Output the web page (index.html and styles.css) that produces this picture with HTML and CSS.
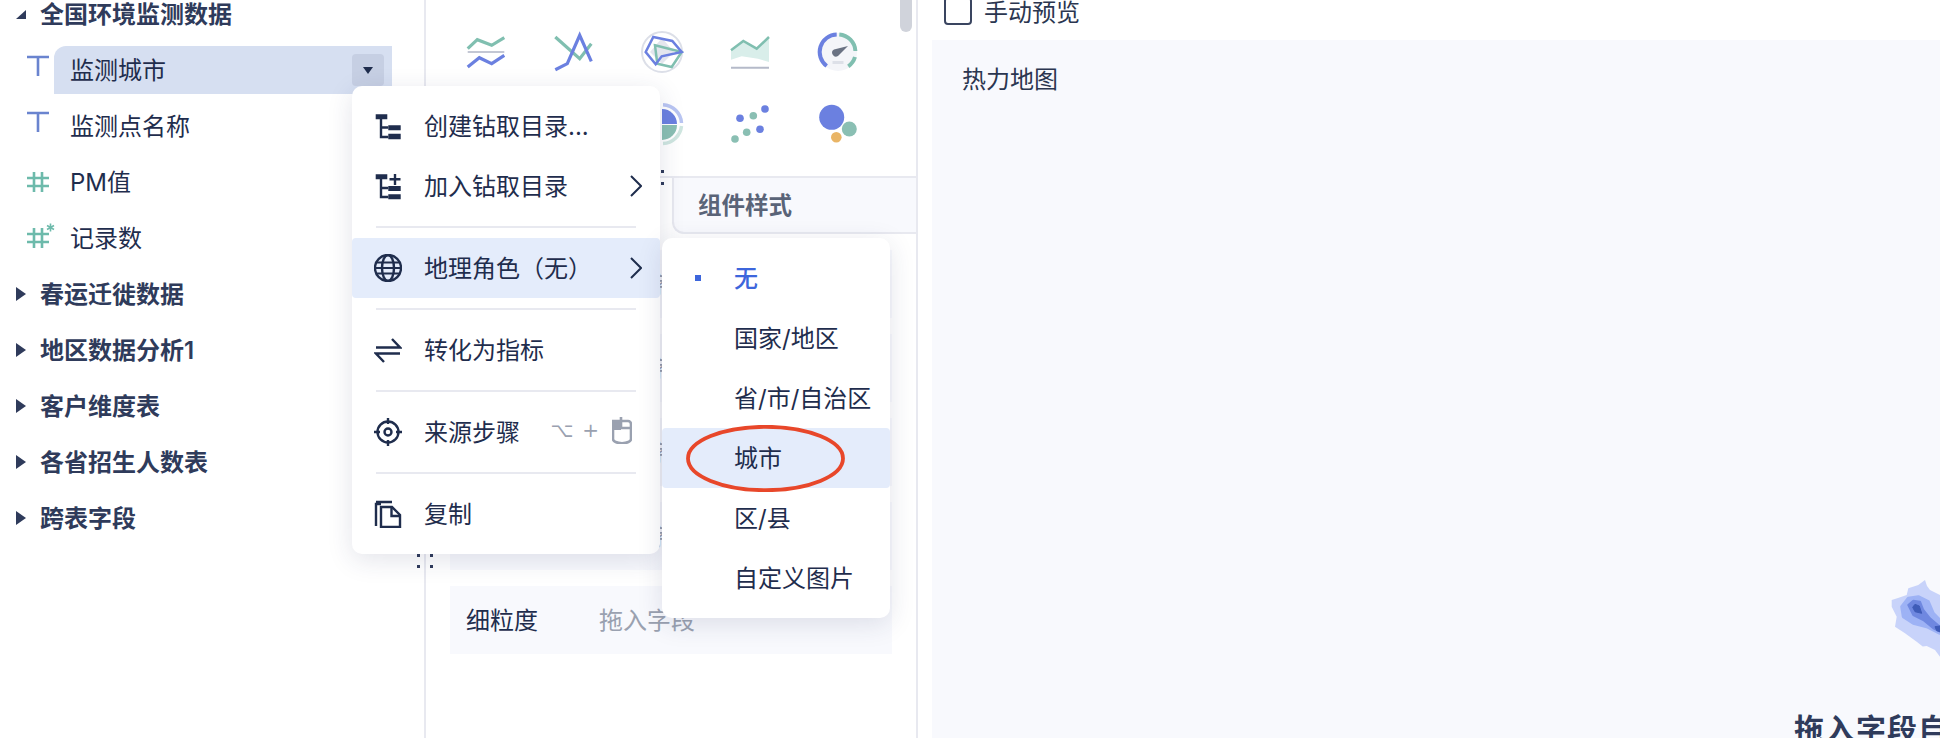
FILE: index.html
```html
<!DOCTYPE html>
<html lang="zh-CN">
<head>
  <meta charset="UTF-8">
  <title>热力地图</title>
  <link rel="stylesheet" href="styles.css">
</head>
<body>

<div class="app">

  <!-- data tree -->
  <aside class="tree-panel">
    <div class="tree-row head">
      <svg class="caret" viewBox="0 0 10 14"><path d="M0 12 10 3v9z"/></svg>
      <span>全国环境监测数据</span>
    </div>
    <div class="tree-row field">
      <svg class="type-icon text-type" viewBox="0 0 27 28"><path d="M0 1h22M11 1v19"/></svg>
      <div class="field-name selected">
        <span>监测城市</span>
        <span class="field-btn"><svg viewBox="0 0 10 7"><path d="M0 0h10L5 7z"/></svg></span>
      </div>
    </div>
    <div class="tree-row field">
      <svg class="type-icon text-type" viewBox="0 0 27 28"><path d="M0 1h22M11 1v19"/></svg>
      <div class="field-name"><span>监测点名称</span></div>
    </div>
    <div class="tree-row field">
      <svg class="type-icon num-type" viewBox="0 0 27 28"><path d="M0 10h22M0 18h22M7 4v20M15 4v20"/></svg>
      <div class="field-name"><span>PM值</span></div>
    </div>
    <div class="tree-row field">
      <svg class="type-icon num-type" viewBox="0 0 27 28"><path d="M0 10h22M0 18h22M7 4v20M15 4v20"/><path class="star" d="M23.5-.5v8M20 1.5l7 4M27 1.5l-7 4"/></svg>
      <div class="field-name"><span>记录数</span></div>
    </div>
    <div class="tree-row head">
      <svg class="caret" viewBox="0 0 10 14"><path d="M0 0l10 7-10 7z"/></svg>
      <span>春运迁徙数据</span>
    </div>
    <div class="tree-row head">
      <svg class="caret" viewBox="0 0 10 14"><path d="M0 0l10 7-10 7z"/></svg>
      <span>地区数据分析1</span>
    </div>
    <div class="tree-row head">
      <svg class="caret" viewBox="0 0 10 14"><path d="M0 0l10 7-10 7z"/></svg>
      <span>客户维度表</span>
    </div>
    <div class="tree-row head">
      <svg class="caret" viewBox="0 0 10 14"><path d="M0 0l10 7-10 7z"/></svg>
      <span>各省招生人数表</span>
    </div>
    <div class="tree-row head">
      <svg class="caret" viewBox="0 0 10 14"><path d="M0 0l10 7-10 7z"/></svg>
      <span>跨表字段</span>
    </div>
    <div class="drag-dots tree-dots"><i></i><i></i><i></i><i></i></div>
  </aside>

  <!-- chart types and settings -->
  <section class="config-panel">
    <div class="scroll-thumb"></div>
    <div class="chart-grid">
      <svg viewBox="0 0 44 44" fill="none" stroke-width="3.2">
        <path stroke="#80bfb0" d="M3.7 18.7 13.3 9.7l14.4 5.6 12.6-7.6"/>
        <path stroke="#c3c7d4" stroke-width="2" d="M3.7 22h36.6"/>
        <path stroke="#6b80e0" d="M3.7 37l11.6-9.3 12.4 6 12.6-8.4"/>
      </svg>
      <svg viewBox="0 0 44 44" fill="none" stroke-width="3.2">
        <path stroke="#80bfb0" d="M3.3 7l24.4 21.7L39.3 13.700"/>
        <path stroke="#6b80e0" d="M3.300 39.700l12-6L27.700 5.300 39.300 31.300"/>
      </svg>
      <svg viewBox="0 0 44 44" fill="none">
        <circle cx="22" cy="22" r="20" stroke="#dcdfe8" stroke-width="2"/>
        <path fill="#e4e6ee" d="M22 8 34 22 22 34 10 22z"/>
        <path stroke="#80bfb0" stroke-width="2.500" d="M15 15.300 41.700 22 31.700 37l-14.400-3.300z"/>
        <path stroke="#6b80e0" stroke-width="2.500" d="M13.300 7l19 4 9.400 11-20 4.300-6 8-10-12.300z"/>
      </svg>
      <svg viewBox="0 0 44 44" fill="none">
        <path fill="#d9eeea" d="M3 20.300 15.300 11l13.400 7.700L41 7v25l-11-3.300-16.300-2.400L3 29.700z"/>
        <path stroke="#80bfb0" stroke-width="2.500" d="M3 20.300 15.300 11l13.400 7.700L41 7"/>
        <path stroke="#b5bac9" stroke-width="2" d="M3 37.700h38"/>
      </svg>
      <svg viewBox="0 0 44 44" fill="none">
        <circle cx="22" cy="22" r="19" fill="#f4f5f9"/>
        <path stroke="#6b80e0" stroke-width="4" d="M10.700 36A17.500 17.500 0 0 1 20.700 4.500"/>
        <path stroke="#80bfb0" stroke-width="4" d="M23.300 4.500A17.500 17.500 0 0 1 39.400 21"/>
        <path stroke="#80bfb0" stroke-width="4" d="M39 27A17.500 17.500 0 0 1 32.300 36.300"/>
        <path fill="#6a7283" d="M18 19.500 32 16 22 26a3.500 3.500 0 0 1-4-6.500z"/>
        <path stroke="#dde0e8" stroke-width="3" d="M16.500 32.500h11"/>
      </svg>
      <div class="chart-slot"></div>
      <div class="chart-slot"></div>
      <svg viewBox="0 0 44 44" fill="none">
        <path fill="#6b80e0" d="M22 22V7a15 15 0 0 1 15 15z"/>
        <path fill="#8abfb3" d="M22 23h15a15 15 0 0 1-15 15z"/>
        <path stroke="#b9c5f2" stroke-width="3.500" d="M23 2.700A19.500 19.500 0 0 1 41.500 21"/>
        <path stroke="#cfe6e0" stroke-width="3.500" d="M41.500 24A19.500 19.500 0 0 1 23 41.500"/>
      </svg>
      <svg viewBox="0 0 44 44">
        <g fill="#6b80e0"><circle cx="12" cy="16.300" r="3.800"/><circle cx="37" cy="7" r="3.800"/><circle cx="32" cy="27.300" r="3.800"/></g>
        <g fill="#8abfb3"><circle cx="25.300" cy="13.700" r="3.800"/><circle cx="18.700" cy="30.300" r="3.800"/><circle cx="7" cy="37" r="3.800"/></g>
      </svg>
      <svg viewBox="0 0 44 44">
        <circle cx="15.700" cy="15.300" r="12.500" fill="#6b80e0"/>
        <circle cx="33.300" cy="27" r="7.500" fill="#8abfb3"/>
        <circle cx="20.300" cy="35.300" r="5.300" fill="#e9b566"/>
      </svg>
    </div>

    <div class="tabs">
      <div class="drag-dots tab-dots"><i></i><i></i><i></i><i></i></div>
      <div class="tab">组件样式</div>
    </div>

    <div class="slots">
      <div class="slot"><span class="slot-label"></span><span class="slot-hint">拖入字段</span></div>
      <div class="slot"><span class="slot-label"></span><span class="slot-hint">拖入字段</span></div>
      <div class="slot"><span class="slot-label"></span><span class="slot-hint">拖入字段</span></div>
      <div class="slot"><span class="slot-label"></span><span class="slot-hint">拖入字段</span></div>
      <div class="slot"><span class="slot-label">细粒度</span><span class="slot-hint">拖入字段</span></div>
    </div>
  </section>

  <!-- preview -->
  <main class="preview">
    <div class="preview-bar">
      <span class="checkbox"></span>
      <span>手动预览</span>
    </div>
    <div class="canvas">
      <div class="canvas-title">热力地图</div>
      <div class="empty-state">
        <svg class="heat-blob" viewBox="0 0 60 90">
          <path fill="#c8d3fa" d="M11.700 30 18 28l8.700-3 1.600-6.700 10-3.300L45 10l2 6 3 4 10 5v61.700L55 80l-8.300-4-4 .5-6-4.800L25 63.300l-10-6.600 1.700-10-5-10z"/>
          <path fill="#9db2f5" d="M21.700 36.700 28.300 28.300 38.300 26.700 48.300 31.700 53.300 43.300 60 50V63.300L46.700 56.700 33.300 53.300 23.300 46.700z" stroke="#9db2f5" stroke-width="3" stroke-linejoin="round"/>
          <path fill="#6f88e0" d="M28.300 35 33.300 30.700 40 31.700 43.300 40 50 48.300 60 56.700V61.700L53.300 58.300 43.300 50 33.300 45z" stroke="#6f88e0" stroke-width="2" stroke-linejoin="round"/>
          <path fill="#3f5cb8" d="M32.700 37.300 35 34.300 39.300 36 41.700 43.300 35 41.700zM55 56.700 60 56V61.700L56.700 60.700z" stroke="#3f5cb8" stroke-linejoin="round"/>
        </svg>
        <div class="empty-text">拖入字段自动生成图表</div>
      </div>
    </div>
  </main>

  <!-- field context menu -->
  <div class="menu field-menu">
    <div class="menu-item">
      <svg class="menu-icon" viewBox="0 0 28 28"><path class="solid" d="M1.700 2.300h11.600v5H1.700zM14.300 13.300h12.400v5H14.300zM14.300 21.700h12.400v5.600H14.300z"/><path d="M7 7v18h7.300M7 15.500h7.300"/></svg>
      <span>创建钻取目录...</span>
    </div>
    <div class="menu-item">
      <svg class="menu-icon" viewBox="0 0 28 28"><path class="solid" d="M1.700 2.300h11.600v5H1.700zM14.300 14h12.400v5H14.300zM14.300 22.300h12.400v5H14.300z"/><path d="M7 7v18h7.300M7 16h7.300M21 2v11M15.500 7.300h11"/></svg>
      <span>加入钻取目录</span>
      <svg class="chevron" viewBox="0 0 12 22"><path d="M1 1l10 10-10 10"/></svg>
    </div>
    <div class="menu-line"></div>
    <div class="menu-item active">
      <svg class="menu-icon" viewBox="0 0 28 28"><circle cx="14" cy="14" r="13"/><ellipse cx="14" cy="14" rx="6" ry="13"/><path d="M1 14h26M3 8.500h22M3 19.500h22" stroke-width="1.800"/></svg>
      <span>地理角色（无）</span>
      <svg class="chevron" viewBox="0 0 12 22"><path d="M1 1l10 10-10 10"/></svg>
    </div>
    <div class="menu-line"></div>
    <div class="menu-item">
      <svg class="menu-icon" viewBox="0 0 28 28"><path d="M2 11.500h24L18 3M26 17.500H2l8 8.500"/></svg>
      <span>转化为指标</span>
    </div>
    <div class="menu-line"></div>
    <div class="menu-item">
      <svg class="menu-icon" viewBox="0 0 28 28"><circle cx="14" cy="14" r="10.500"/><circle cx="14" cy="14" r="3.500"/><path d="M14 0v6M14 22v6M0 14h6M22 14h6"/></svg>
      <span>来源步骤</span>
      <span class="shortcut">
        <span>⌥</span><span>+</span>
        <svg viewBox="0 0 20 28"><path class="fill-part" d="M1 5h8v9H1z"/><path d="M1 12V23a8.500 4 0 0 0 18 0V8a3 3 0 0 0-3-3H1v7h18M9 5V12M9 5V1"/></svg>
      </span>
    </div>
    <div class="menu-line"></div>
    <div class="menu-item">
      <svg class="menu-icon" viewBox="0 0 28 28"><path d="M7 4H2v22M2 2h16"/><path d="M7 7h11l8 8v12H7z"/><path d="M17.500 7v9H26"/></svg>
      <span>复制</span>
    </div>
  </div>

  <!-- geo role submenu -->
  <div class="menu geo-menu">
    <div class="menu-item picked"><i class="pick-dot"></i><span>无</span></div>
    <div class="menu-item"><i class="pick-dot off"></i><span>国家/地区</span></div>
    <div class="menu-item"><i class="pick-dot off"></i><span>省/市/自治区</span></div>
    <div class="menu-item active">
      <i class="pick-dot off"></i><span>城市</span>
      <svg class="mark" viewBox="0 0 159 67"><ellipse cx="79.500" cy="33.500" rx="77.500" ry="31.700"/></svg>
    </div>
    <div class="menu-item"><i class="pick-dot off"></i><span>区/县</span></div>
    <div class="menu-item"><i class="pick-dot off"></i><span>自定义图片</span></div>
  </div>

</div>

</body>
</html>
```

FILE: styles.css
```css
* {
  box-sizing: border-box;
}
html, body {
  margin: 0;
  height: 738px;
  overflow: hidden;
  background: #fff;
}
body {
  font-family: Inter, "Noto Sans CJK SC", sans-serif;
  font-size: 24px;
  color: #1f2d4d;
}
.app {
  position: relative;
  display: flex;
  width: 1940px;
  height: 738px;
  overflow: hidden;
}

/* tree */
.tree-panel {
  position: relative;
  flex: none;
  width: 426px;
  border-right: 2px solid #e8e9f0;
}
.tree-row {
  display: flex;
  align-items: center;
  height: 48px;
  margin-bottom: 8px;
  width: 392px;
}
.tree-row:first-child {
  margin-top: -10px;
}
.head {
  padding: 0 0 4px 16px;
  color: #2f3b5b;
  font-weight: 600;
}
.caret {
  width: 10px;
  height: 14px;
  margin: 4px 14px 0 0;
  fill: #2f3b5b;
}
.field {
  padding-left: 27px;
}
.type-icon {
  flex: none;
  width: 27px;
  height: 28px;
  overflow: visible;
  fill: none;
  stroke-width: 2.6;
}
.text-type {
  stroke: #6a84cf;
}
.num-type {
  stroke: #6dbaab;
}
.star {
  stroke-width: 1.6;
}
.field-name {
  flex: 1;
  display: flex;
  align-items: center;
  justify-content: space-between;
  height: 48px;
  padding: 0 8px 4px 16px;
}
.selected {
  background: #d6dff1;
  border-top-left-radius: 12px;
}
.field-btn {
  display: flex;
  align-items: center;
  justify-content: center;
  width: 32px;
  height: 32px;
  margin-top: 4px;
  background: #c6cfe3;
  border-radius: 4px;
}
.field-btn svg {
  width: 10px;
  height: 7px;
  fill: #1f2d4d;
}

/* drag handles */
.drag-dots {
  position: absolute;
  display: grid;
  grid-template-columns: 3px 3px;
  column-gap: 10px;
  row-gap: 8px;
}
.drag-dots i {
  width: 3px;
  height: 3px;
  background: #2f3b5b;
}
.tree-dots {
  left: 417px;
  top: 554px;
}
.tab-dots {
  left: 222px;
  top: -8px;
  row-gap: 9px;
}

/* config panel */
.config-panel {
  position: relative;
  flex: none;
  width: 492px;
  height: 738px;
  border-right: 2px solid #e8e9f0;
}
.scroll-thumb {
  position: absolute;
  right: 4px;
  top: 0;
  width: 12px;
  height: 32px;
  background: #d0d3db;
  border-radius: 0 0 6px 6px;
}
.chart-grid {
  display: grid;
  grid-template-columns: repeat(5, 88px);
  grid-auto-rows: 72px;
  justify-items: center;
  align-items: center;
  height: 176px;
  padding: 16px 0 0 16px;
}
.chart-grid svg {
  width: 44px;
  height: 44px;
}
.tabs {
  position: relative;
  display: flex;
  justify-content: flex-end;
  height: 58px;
  border-top: 2px solid #e8e9f0;
}
.tab {
  width: 244px;
  height: 56px;
  padding-left: 24px;
  line-height: 56px;
  font-size: 23.5px;
  font-weight: 600;
  color: #5a6478;
  background: #f8f9fd;
  border-left: 2px solid #e8e9f0;
  border-bottom: 2px solid #e8e9f0;
  border-bottom-left-radius: 12px;
}
.slots {
  display: flex;
  flex-direction: column;
  gap: 16px;
  padding: 16px 24px 0;
}
.slot {
  display: flex;
  align-items: center;
  height: 68px;
  padding: 0 0 4px 16px;
  background: #f8f9fd;
}
.slot-label {
  width: 133px;
}
.slot-hint {
  color: #9aa1b0;
}

/* preview */
.preview {
  flex: 1;
  min-width: 0;
}
.preview-bar {
  display: flex;
  gap: 12px;
  height: 40px;
  padding-left: 26px;
  line-height: 26px;
  color: #2b3650;
}
.checkbox {
  width: 28px;
  height: 28px;
  margin-top: -3px;
  border: 2px solid #3a4560;
  border-radius: 4px;
}
.canvas {
  height: 698px;
  margin-left: 14px;
  background: #f8f9fd;
  overflow: hidden;
}
.canvas-title {
  padding: 22px 0 0 30px;
  line-height: 36px;
  color: #2b3650;
}
.empty-state {
  margin: 0 0 0 862px;
  white-space: nowrap;
}
.heat-blob {
  display: block;
  width: 60px;
  height: 90px;
  margin: 472px 0 0 86px;
}
.empty-text {
  width: 400px;
  margin-top: 49px;
  font-size: 30px;
  line-height: 40px;
  font-weight: 700;
  letter-spacing: 1px;
  color: #2f3b5b;
}

/* menus */
.menu {
  position: absolute;
  padding: 10px 0;
  background: #fff;
  border-radius: 10px;
  box-shadow: 0 6px 26px rgba(40, 50, 90, 0.13);
}
.field-menu {
  left: 352px;
  top: 86px;
  width: 308px;
}
.geo-menu {
  left: 662px;
  top: 238px;
  width: 228px;
}
.menu-item {
  position: relative;
  display: flex;
  align-items: center;
  height: 60px;
  padding-bottom: 4px;
}
.field-menu .menu-item {
  padding: 0 18px 4px 22px;
}
.active {
  background: #e4ecfb;
  border-radius: 4px;
}
.menu-line {
  height: 2px;
  margin: 10px 24px;
  background: #e8e9f0;
}
.menu-icon {
  flex: none;
  width: 28px;
  height: 28px;
  margin: 4px 22px 0 0;
  fill: none;
  stroke: #1f2d4d;
  stroke-width: 2.4;
}
.menu-icon .solid {
  fill: #1f2d4d;
  stroke: none;
}
.chevron {
  width: 12px;
  height: 22px;
  margin: 4px 0 0 auto;
  fill: none;
  stroke: #1f2d4d;
  stroke-width: 2;
}
.shortcut {
  display: flex;
  align-items: center;
  gap: 9px;
  margin: 0 10px 0 auto;
  color: #9aa1b0;
  font-family: "DejaVu Sans", sans-serif;
  font-size: 20px;
}
.shortcut svg {
  width: 20px;
  height: 28px;
  margin-left: 4px;
  fill: none;
  stroke: #9aa1b0;
  stroke-width: 2.6;
}
.shortcut .fill-part {
  fill: #9aa1b0;
  stroke: none;
}
.pick-dot {
  flex: none;
  width: 6px;
  height: 6px;
  margin: 4px 33px 0 33px;
  background: #3d66dc;
}
.pick-dot.off {
  background: none;
}
.picked {
  color: #3d66dc;
  font-weight: 500;
}
.mark {
  position: absolute;
  left: 24px;
  top: -3px;
  width: 159px;
  height: 67px;
  fill: none;
  stroke: #e8472a;
  stroke-width: 3.8;
}
```
